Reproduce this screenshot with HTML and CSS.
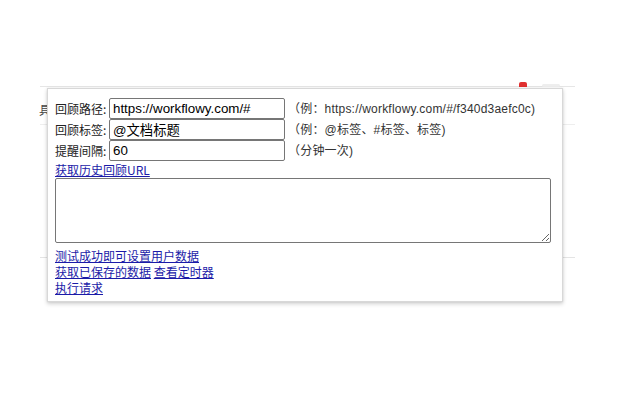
FILE: index.html
```html
<!DOCTYPE html>
<html lang="zh-CN">
<head>
<meta charset="utf-8">
<title>回顾设置</title>
<link rel="stylesheet" href="styles.css">
</head>
<body>
<div class="backdrop">
  <div class="bd-bar">
    <span class="bd-badge"></span>
    <span class="bd-pill"></span>
  </div>
  <div class="bd-body">
    <span class="bd-char">具</span>
  </div>
  <div class="bd-rule"></div>
</div>

<div class="popup">
  <div class="row">
    <label class="label">回顾路径:</label>
    <input class="field" type="text" value="https://workflowy.com/#">
    <span class="hint">（例：https://workflowy.com/#/f340d3aefc0c)</span>
  </div>
  <div class="row">
    <label class="label">回顾标签:</label>
    <input class="field" type="text" value="@文档标题">
    <span class="hint">（例：@标签、#标签、标签)</span>
  </div>
  <div class="row">
    <label class="label">提醒间隔:</label>
    <input class="field" type="text" value="60">
    <span class="hint">（分钟一次)</span>
  </div>
  <div class="line first-link"><a href="#">获取历史回顾URL</a></div>
  <textarea class="output"></textarea>
  <div class="links">
    <div class="line"><a href="#">测试成功即可设置用户数据</a></div>
    <div class="line"><a href="#">获取已保存的数据</a> <a href="#">查看定时器</a></div>
    <div class="line"><a href="#">执行请求</a></div>
  </div>
</div>
</body>
</html>
```

FILE: styles.css
```css
html, body {
  margin: 0;
  padding: 0;
  background: #ffffff;
}
body {
  width: 640px;
  height: 400px;
  position: relative;
  overflow: hidden;
  font-family: "Noto Sans CJK SC", "Liberation Sans", sans-serif;
}

/* faded page behind the popup */
.backdrop {
  padding-top: 80px;
  margin-left: 40px;
  width: 535px;
}
.bd-bar {
  height: 6px;
  border-bottom: 1px solid #e6e6e6;
  position: relative;
}
.bd-badge {
  position: absolute;
  left: 479px;
  top: 2px;
  width: 8px;
  height: 5px;
  background: #e03030;
  border-radius: 2px 2px 0 0;
}
.bd-pill {
  position: absolute;
  left: 502px;
  top: 4px;
  width: 18px;
  height: 3px;
  background: #eeeeee;
  border-radius: 2px;
}
.bd-body {
  height: 38px;
  border-bottom: 1px solid #eeeeee;
  padding-top: 9px;
  box-sizing: border-box;
}
.bd-char {
  display: inline-block;
  margin-left: -1px;
  font-size: 12px;
  line-height: 16px;
  color: #444;
}
.bd-rule {
  margin-top: 132px;
  width: 535px;
  height: 1px;
  background: #e4e4e4;
}

/* extension popup */
.popup {
  position: absolute;
  left: 47px;
  top: 88px;
  width: 516px;
  height: 214px;
  box-sizing: border-box;
  background: #ffffff;
  border: 1px solid #d8d8d8;
  box-shadow: 0 2px 4px rgba(0,0,0,0.18), 0 0 2px rgba(0,0,0,0.08);
  padding: 9px 0 0 7px;
  font-size: 12px;
  color: #222;
}
.row {
  display: flex;
  align-items: center;
  height: 21px;
}
.label {
  width: 54px;
  font-size: 12px;
  line-height: 16px;
  color: #222;
  white-space: nowrap;
}
.field {
  width: 176px;
  height: 21px;
  box-sizing: border-box;
  margin: 0;
  padding: 1px 3px;
  border: 1px solid #767676;
  border-radius: 2px;
  font-family: "Liberation Sans", "Noto Sans CJK SC", sans-serif;
  font-size: 13.333px;
  color: #000;
  background: #fff;
}
.hint {
  margin-left: 3px;
  font-family: "Liberation Sans", "Noto Sans CJK SC", sans-serif;
  font-size: 12px;
  line-height: 16px;
  letter-spacing: 0.2px;
  color: #333;
  white-space: nowrap;
}
.line {
  font-size: 12px;
  line-height: 16px;
  height: 16px;
  white-space: nowrap;
}
.first-link {
  margin-top: 1px;
}
a {
  color: #1b1ba8;
  text-decoration: underline;
}
.output {
  display: block;
  width: 496px;
  height: 65px;
  box-sizing: border-box;
  margin: 0;
  border: 1px solid #767676;
  border-radius: 2px;
  resize: both;
}
.links {
  margin-top: 5px;
}
```
